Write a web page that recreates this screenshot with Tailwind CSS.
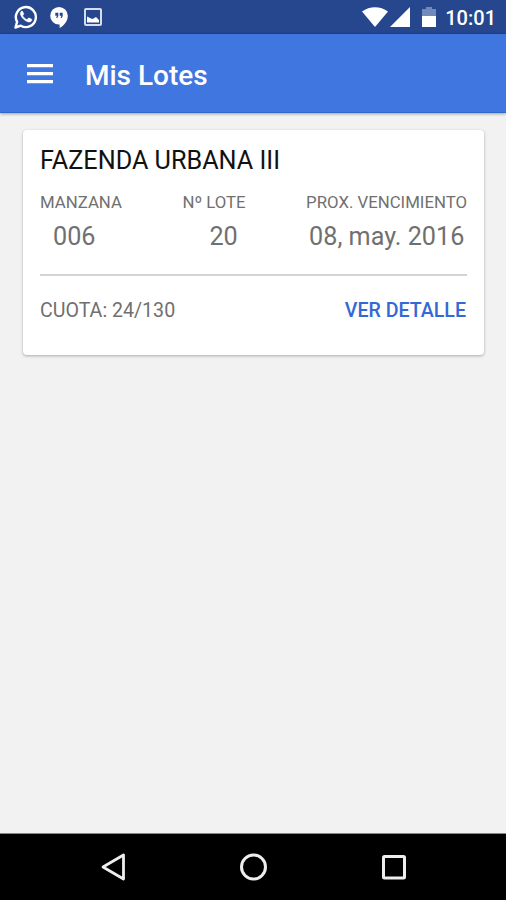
<!DOCTYPE html>
<html lang="es">
<head>
    <meta charset="UTF-8">
    <meta name="viewport" content="width=device-width, initial-scale=1.0">
    <title>Mis Lotes</title>
    <script src="https://cdn.jsdelivr.net/npm/@tailwindcss/browser@4"></script>
</head>
<body class="bg-[#f2f2f2] font-['Roboto',sans-serif]">
    <div class="flex h-[900px] w-[506px] flex-col overflow-hidden">

        <!-- Barra de estado -->
        <div class="flex h-[34px] shrink-0 items-center justify-between border-b border-[#25427f] bg-[#26478e] pt-px pr-[11px] pl-3.5 text-white">
            <div class="flex items-center">
                <svg class="h-6 w-6" viewBox="0 0 24 24" fill="none">
                    <path d="M1.500 22.500l1.600-5.600A10 10 0 1 1 6.800 20.700z" stroke="currentColor" stroke-width="2.400" stroke-linejoin="round"/>
                    <path d="M8.600 6.400c-.4-.5-1-.4-1.400 0-1 1-1 2.400-.5 3.600 1.200 3 3.800 5.700 7.300 6.900 1.500.5 3.200-.2 3.700-1.500.2-.6.200-1.100-.2-1.300l-2.300-1.100c-.4-.2-.7 0-1 .3l-.8 1c-.3.300-.6.200-.9.100-1.700-.8-2.900-1.900-3.700-3.400-.2-.4 0-.6.200-.8l.6-.8c.2-.3.200-.5.100-.8z" fill="currentColor" stroke="currentColor" stroke-width=".5"/>
                </svg>
                <svg class="ml-3 h-[22px] w-[18px]" viewBox="0 0 18 22">
                    <path d="M9 1a8.800 8.800 0 0 0 0 17.600h.6V22c4.800-2.300 8.200-7.300 8.200-12.200A8.800 8.800 0 0 0 9 1z" fill="currentColor"/>
                    <path d="M5.300 6.800h3v3.200L7.300 12H6.200l.7-2.200H5.300zM9.700 6.800h3v3.200l-1 2h-1.100l.7-2.200H9.700z" fill="#26478e"/>
                </svg>
                <svg class="ml-4 h-[18px] w-[18px]" viewBox="0 0 18 18">
                    <rect x="1" y="1" width="16" height="16" rx="1" fill="none" stroke="#d5dcec" stroke-width="2"/>
                    <path d="M3 14.500V8.500l3 1.500 2.500 1 3.500-2 3 3v2.500z" fill="currentColor"/>
                </svg>
            </div>
            <div class="flex items-center">
                <svg class="h-5 w-[26px]" viewBox="0 0 26 20">
                    <path d="M0 4.500C7.500-1.200 18.500-1.200 26 4.500L13 20z" fill="currentColor"/>
                </svg>
                <svg class="ml-0.5 h-5 w-5" viewBox="0 0 20 20">
                    <path d="M20 0v20H0z" fill="currentColor"/>
                </svg>
                <svg class="ml-3 h-5 w-3.5" viewBox="0 0 14 20">
                    <path d="M4 0h6v2h4v7H0V2h4z" fill="#7289b9"/>
                    <path d="M0 9h14v11H0z" fill="currentColor"/>
                </svg>
                <span class="-mr-px ml-[9px] pt-0.5 text-[20px] leading-none font-medium">10:01</span>
            </div>
        </div>

        <!-- Cabecera -->
        <header class="z-10 flex h-[79px] shrink-0 items-center border-b border-[#2e68c8] bg-[#4076e0] pl-[27px] text-white shadow-[0_1px_3px_rgba(0,0,0,0.35)]">
            <svg class="mt-0.5 h-5 w-[26px]" viewBox="0 0 26 20">
                <path d="M0 0h26v3.200H0zM0 8h26v3.200H0zM0 16h26v3.200H0z" fill="currentColor"/>
            </svg>
            <h1 class="mt-1.5 ml-8 text-[28px] leading-8 font-medium whitespace-nowrap">Mis Lotes</h1>
        </header>

        <!-- Lista de lotes -->
        <main class="flex-1 pt-[17px] pr-[22px] pl-[23px]">
            <article class="flex h-[225px] flex-col rounded bg-white px-[17px] text-[#707070] shadow-[0_1px_3px_rgba(0,0,0,0.3)]">
                <h2 class="pt-[15px] text-[25.2px] leading-8 whitespace-nowrap text-[#111]">FAZENDA URBANA III</h2>
                <div class="flex justify-between pt-[15px] whitespace-nowrap">
                    <div>
                        <p class="text-[16.8px] leading-5">MANZANA</p>
                        <p class="pt-[9px] pl-[13px] text-[25.2px] leading-8">006</p>
                    </div>
                    <div>
                        <p class="text-[16.8px] leading-5">Nº LOTE</p>
                        <p class="pt-[9px] pl-[27px] text-[25.2px] leading-8">20</p>
                    </div>
                    <div>
                        <p class="text-[16.8px] leading-5">PROX. VENCIMIENTO</p>
                        <p class="pt-[9px] pl-[3px] text-[25.2px] leading-8">08, may. 2016</p>
                    </div>
                </div>
                <hr class="mt-[21px] border-t-2 border-[#d3d3d3]">
                <div class="flex items-center justify-between pt-[23px] text-[19.6px] leading-6 whitespace-nowrap">
                    <span>CUOTA: 24/130</span>
                    <button type="button" class="pr-px font-medium text-[#3468d4]">VER DETALLE</button>
                </div>
            </article>
        </main>

        <!-- Barra de navegación -->
        <nav class="flex h-[67px] shrink-0 items-center border-t border-[#888] bg-black pl-[101px] text-[#eee]">
            <svg class="h-7 w-6" viewBox="0 0 24 28" fill="none">
                <path d="M2 14L22.500 2v24z" stroke="currentColor" stroke-width="2.800" stroke-linejoin="round"/>
            </svg>
            <svg class="ml-[114px] h-7 w-7" viewBox="0 0 28 28" fill="none">
                <circle cx="14.500" cy="14" r="12" stroke="currentColor" stroke-width="3"/>
            </svg>
            <svg class="ml-[115px] h-[26px] w-6" viewBox="0 0 24 26" fill="none">
                <rect x="1.500" y="2.500" width="21" height="21.500" rx="1" stroke="currentColor" stroke-width="3"/>
            </svg>
        </nav>
    </div>
</body>
</html>
